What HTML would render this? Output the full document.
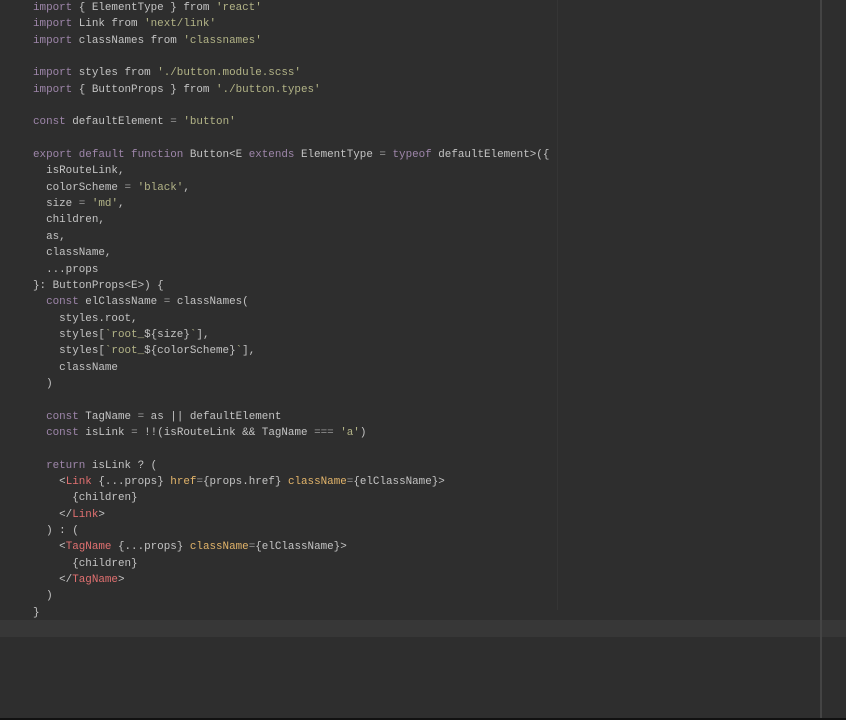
<!DOCTYPE html>
<html><head><meta charset="utf-8"><style>
html,body{margin:0;padding:0;}
body{width:846px;height:720px;background:#2e2e2e;position:relative;overflow:hidden;}
pre{position:absolute;left:33px;top:0px;margin:0;font-family:"Liberation Mono",monospace;font-size:10.9px;line-height:16.35px;color:#c4c4c4;}
.k{color:#9e86aa}.s{color:#b3b487}.t{color:#e07070}.a{color:#e2b46a}.p{color:#9a9a9a}
.band{position:absolute;left:0;top:620px;width:846px;height:17px;background:#373737;}
.vl{position:absolute;left:820px;top:0;width:2px;height:718px;background:#444;}
.vl2{position:absolute;left:557px;top:0;width:1px;height:610px;background:#353535;}
.bot{position:absolute;left:0;top:718px;width:846px;height:2px;background:#111;}
</style></head><body>
<div class="band"></div><div class="vl2"></div><div class="vl"></div><div class="bot"></div>
<pre><span class="k">import</span> { ElementType } from <span class="s">'react'</span>
<span class="k">import</span> Link from <span class="s">'next/link'</span>
<span class="k">import</span> classNames from <span class="s">'classnames'</span>

<span class="k">import</span> styles from <span class="s">'./button.module.scss'</span>
<span class="k">import</span> { ButtonProps } from <span class="s">'./button.types'</span>

<span class="k">const</span> defaultElement <span class="p">=</span> <span class="s">'button'</span>

<span class="k">export default function</span> Button&lt;E <span class="k">extends</span> ElementType <span class="p">=</span> <span class="k">typeof</span> defaultElement&gt;({
  isRouteLink,
  colorScheme <span class="p">=</span> <span class="s">'black'</span>,
  size <span class="p">=</span> <span class="s">'md'</span>,
  children,
  as,
  className,
  ...props
}: ButtonProps&lt;E&gt;) {
  <span class="k">const</span> elClassName <span class="p">=</span> classNames(
    styles.root,
    styles[<span class="s">`root_</span>${size}<span class="s">`</span>],
    styles[<span class="s">`root_</span>${colorScheme}<span class="s">`</span>],
    className
  )

  <span class="k">const</span> TagName <span class="p">=</span> as || defaultElement
  <span class="k">const</span> isLink <span class="p">=</span> !!(isRouteLink &amp;&amp; TagName <span class="p">===</span> <span class="s">'a'</span>)

  <span class="k">return</span> isLink ? (
    &lt;<span class="t">Link</span> {...props} <span class="a">href</span><span class="p">=</span>{props.href} <span class="a">className</span><span class="p">=</span>{elClassName}&gt;
      {children}
    &lt;/<span class="t">Link</span>&gt;
  ) : (
    &lt;<span class="t">TagName</span> {...props} <span class="a">className</span><span class="p">=</span>{elClassName}&gt;
      {children}
    &lt;/<span class="t">TagName</span>&gt;
  )
}</pre>
</body></html>
